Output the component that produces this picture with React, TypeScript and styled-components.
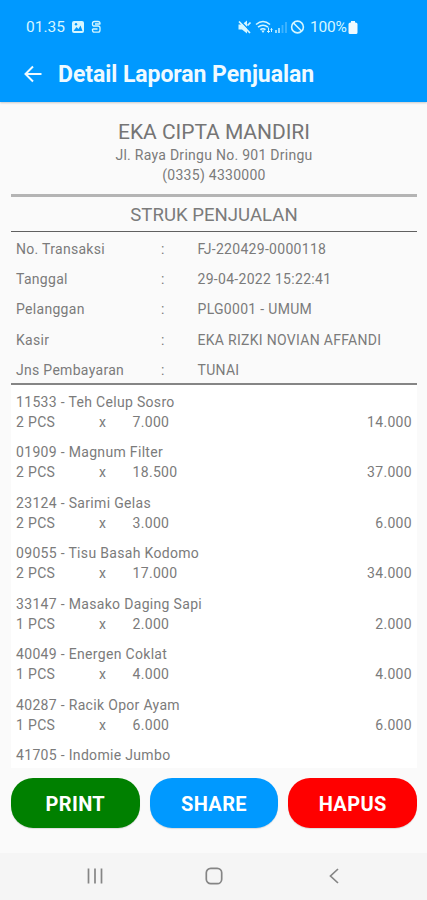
import React from "react";
import styled, { createGlobalStyle } from "styled-components";

const GlobalStyle = createGlobalStyle`
  * { box-sizing: border-box; }
  body { margin: 0; background: #fafafa; font-family: Roboto, sans-serif; color: #7b7b7b; }
`;

const Screen = styled.div`
  width: 427px;
  height: 900px;
  display: flex;
  flex-direction: column;
  overflow: hidden;
`;

const Header = styled.header`
  flex: none;
  height: 102px;
  background: #0099ff;
  color: #effaff;
  box-shadow: 0 1px 2px rgba(0, 0, 0, 0.2);
`;

const StatusBar = styled.div`
  height: 49px;
  padding: 5px 69px 0 26px;
  display: flex;
  align-items: center;
  font-size: 15.5px;
  color: #d5f6ff;
`;

const StatusTime = styled.span`
  width: 46px;
`;

const StatusIcons = styled.div`
  margin-left: auto;
  display: flex;
  align-items: center;
`;

const Percent = styled.span`
  margin-left: 4px;
  width: 38px;
  letter-spacing: -0.2px;
  white-space: nowrap;
`;

const TitleBar = styled.div`
  height: 52px;
  padding-left: 23px;
  display: flex;
  align-items: center;
`;

const Title = styled.h1`
  margin: 0 0 0 15px;
  font-size: 23px;
  line-height: 30px;
  font-weight: 700;
  letter-spacing: -0.06px;
  white-space: nowrap;
`;

const Receipt = styled.main`
  flex: none;
  height: 666px;
  margin: 0 10px 0 11px;
  display: flex;
  flex-direction: column;
`;

const Store = styled.section`
  height: 92px;
  padding-top: 17px;
  text-align: center;
`;

const StoreName = styled.div`
  font-size: 21px;
  line-height: 26px;
  letter-spacing: -0.05px;
  color: #757575;
`;

const StoreLine = styled.div`
  font-size: 14px;
  line-height: 20px;
  letter-spacing: 0.27px;
`;

const Section = styled.h2`
  margin: 0;
  height: 38px;
  border-top: 3px solid #b4b4b4;
  border-bottom: 1.5px solid #606060;
  font-size: 18.6px;
  line-height: 36px;
  font-weight: 400;
  text-align: center;
`;

const Info = styled.dl`
  margin: 0;
  height: 153px;
  padding: 1.6px 5px 0;
  border-bottom: 2px solid #858585;
`;

const InfoRow = styled.div`
  display: grid;
  grid-template-columns: 145px 36.5px 1fr;
  height: 30.4px;
  line-height: 30.4px;
  font-size: 14px;
  white-space: nowrap;
`;

const Term = styled.dt`
  letter-spacing: 0.3px;
`;

const Value = styled.dd`
  margin: 0;
  letter-spacing: 0.3px;
`;

const Items = styled.ul`
  margin: 0;
  padding: 7px 5px 0;
  list-style: none;
  background: #fff;
  flex: 1;
  min-height: 0;
  overflow: hidden;
`;

const Item = styled.li`
  height: 50.45px;
  font-size: 14px;
  line-height: 20px;
  letter-spacing: 0.32px;
`;

const ItemDetail = styled.div`
  display: grid;
  grid-template-columns: 83px 33.5px 1fr auto;
`;

const Actions = styled.div`
  flex: none;
  height: 85px;
  padding: 10px 10px 0 11px;
  display: grid;
  grid-template-columns: repeat(3, 1fr);
  column-gap: 10px;
`;

const ActionButton = styled.button<{ $color: string }>`
  height: 49.5px;
  padding: 2px 0 0;
  border: 0;
  border-radius: 22px;
  background: ${(p) => p.$color};
  color: #fff;
  font: 700 20px Roboto, sans-serif;
  letter-spacing: 0.35px;
  box-shadow: 0 1px 1px rgba(0, 0, 0, 0.12);
`;

const NavBar = styled.nav`
  flex: 1;
  background: #f5f5f5;
  padding: 0 86px 1px;
  display: flex;
  align-items: center;
  justify-content: space-between;
`;

const HomeIcon = styled.svg`
  margin-right: 3px;
`;

const info = [
  ["No. Transaksi", "FJ-220429-0000118"],
  ["Tanggal", "29-04-2022 15:22:41"],
  ["Pelanggan", "PLG0001 - UMUM"],
  ["Kasir", "EKA RIZKI NOVIAN AFFANDI"],
  ["Jns Pembayaran", "TUNAI"],
];

const items = [
  ["11533 - Teh Celup Sosro", "2 PCS", "7.000", "14.000"],
  ["01909 - Magnum Filter", "2 PCS", "18.500", "37.000"],
  ["23124 - Sarimi Gelas", "2 PCS", "3.000", "6.000"],
  ["09055 - Tisu Basah Kodomo", "2 PCS", "17.000", "34.000"],
  ["33147 - Masako Daging Sapi", "1 PCS", "2.000", "2.000"],
  ["40049 - Energen Coklat", "1 PCS", "4.000", "4.000"],
  ["40287 - Racik Opor Ayam", "1 PCS", "6.000", "6.000"],
  ["41705 - Indomie Jumbo"],
];

const NotificationIcons = () => (
  <svg width="30" height="14" viewBox="0 0 30 14" fill="none">
    <rect x="0" y="1" width="12" height="12" rx="2" fill="currentColor" />
    <path d="M1.500 11 4.500 7l2 2 2-3.500 2 5.500z" fill="#0099ff" />
    <circle cx="4" cy="4.200" r="1.200" fill="#0099ff" />
    <path d="M28 4.500V3.500Q28 1.500 26 1.500H22.500Q20.500 1.500 20.500 3.500V4.500Q20.500 6 22.500 6H26Q28 6 28 8V10Q28 12.200 26 12.200H22.500Q20.500 12.200 20.500 10V9M23 4H28M20.500 9H25.500" stroke="currentColor" strokeWidth="1.300" />
  </svg>
);

const SignalIcons = () => (
  <svg width="68" height="16" viewBox="0 0 68 16" fill="none">
    <path d="M0.500 5.500H4L9 1.500V14.500L4 10.500H0.500z" fill="currentColor" />
    <path d="M2.500 2 13 13" stroke="#0099ff" strokeWidth="1.500" />
    <path d="M1 2.500 12 14M9.500 6.500l3-3" stroke="currentColor" strokeWidth="1.700" />
    <g stroke="currentColor" strokeWidth="1.600">
      <path d="M18 5.500Q25-.5 32 5.500M20 8.200q5-4 10 0M22.300 10.700q2.700-2 5.200 0" />
      <path d="M30.500 8.500v5M29 12l1.500 1.500L32 12M33.500 13V9.500M32.500 10.500l1-1 1 1" strokeWidth="1" />
    </g>
    <path d="M23.300 11.500H26.700L25 14z" fill="currentColor" />
    <path d="M38 14v-3M41 14V9" stroke="currentColor" strokeWidth="1.800" opacity=".8" />
    <path d="M44.500 14V6M48 14V3" stroke="currentColor" strokeWidth="1.800" opacity=".3" />
    <circle cx="59.500" cy="8" r="5.900" stroke="currentColor" strokeWidth="1.600" />
    <path d="M55.500 4 63.500 12" stroke="currentColor" strokeWidth="1.600" />
  </svg>
);

const BatteryIcon = () => (
  <svg width="10" height="15" viewBox="0 0 10 15" fill="#effaff">
    <path d="M3 1h4v1.500h.5Q9.500 2.500 9.500 4v8.500Q9.500 14 8 14h-6Q.5 14 .5 12.500V4q0-1.500 2-1.500H3z" />
  </svg>
);

const BackArrow = () => (
  <svg width="20" height="20" viewBox="0 0 20 20" fill="none" stroke="currentColor" strokeWidth="2">
    <path d="M18.500 9H3M10 1.500 2.500 9l7.500 7.500" />
  </svg>
);

export default function App() {
  return (
    <Screen>
      <GlobalStyle />
      <Header>
        <StatusBar>
          <StatusTime>01.35</StatusTime>
          <NotificationIcons />
          <StatusIcons>
            <SignalIcons />
            <Percent>100%</Percent>
            <BatteryIcon />
          </StatusIcons>
        </StatusBar>
        <TitleBar>
          <BackArrow />
          <Title>Detail Laporan Penjualan</Title>
        </TitleBar>
      </Header>
      <Receipt>
        <Store>
          <StoreName>EKA CIPTA MANDIRI</StoreName>
          <StoreLine>Jl. Raya Dringu No. 901 Dringu</StoreLine>
          <StoreLine>(0335) 4330000</StoreLine>
        </Store>
        <Section>STRUK PENJUALAN</Section>
        <Info>
          {info.map(([label, value]) => (
            <InfoRow key={label}>
              <Term>{label}</Term>
              <span>:</span>
              <Value>{value}</Value>
            </InfoRow>
          ))}
        </Info>
        <Items>
          {items.map(([name, qty, price, total]) => (
            <Item key={name}>
              {name}
              {qty && (
                <ItemDetail>
                  <span>{qty}</span>
                  <span>x</span>
                  <span>{price}</span>
                  <span>{total}</span>
                </ItemDetail>
              )}
            </Item>
          ))}
        </Items>
      </Receipt>
      <Actions>
        <ActionButton $color="#008000">PRINT</ActionButton>
        <ActionButton $color="#0099ff">SHARE</ActionButton>
        <ActionButton $color="#ff0000">HAPUS</ActionButton>
      </Actions>
      <NavBar>
        <svg width="18" height="18" viewBox="0 0 18 18" stroke="#858585" strokeWidth="1.700">
          <path d="M2.500 1.500v15M9 1.500v15M15.500 1.500v15" />
        </svg>
        <HomeIcon width="18" height="18" viewBox="0 0 18 18" fill="none" stroke="#858585" strokeWidth="1.700">
          <rect x="1.300" y="1.300" width="15.400" height="15.400" rx="4.500" />
        </HomeIcon>
        <svg width="14" height="18" viewBox="0 0 14 18" fill="none" stroke="#858585" strokeWidth="1.700">
          <path d="M11 2 3.500 9l7.500 7" />
        </svg>
      </NavBar>
    </Screen>
  );
}
